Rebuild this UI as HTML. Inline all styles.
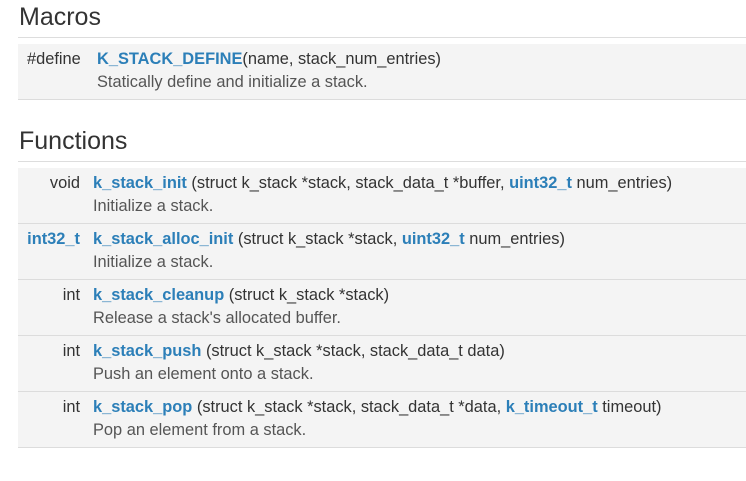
<!DOCTYPE html>
<html><head><style>
body{margin:0;width:746px;height:481px;background:#fff;font-family:"Liberation Sans",sans-serif;color:#333;position:relative;overflow:hidden}
h2{position:absolute;left:19px;margin:0;font-weight:normal;font-size:25px;color:#333}
.hl{position:absolute;left:18px;right:0;height:1px;background:#ddd}
.row{position:absolute;left:18px;right:0;height:55px;background:#f4f4f4;border-bottom:1px solid #dcdcdc;font-size:16.4px}
.t{position:absolute;top:6px;text-align:right;white-space:nowrap}
.n{position:absolute;top:6px;white-space:nowrap}
.d{position:absolute;top:29px;white-space:nowrap;color:#555}
b{color:#2c7fb8}
</style></head><body>
<h2 style="top:3px">Macros</h2>
<div class="hl" style="top:37px"></div>
<div class="row" style="top:44px">
<span class="t" style="left:9px">#define</span>
<span class="n" style="left:79px"><b>K_STACK_DEFINE</b>(name, stack_num_entries)</span>
<span class="d" style="left:79px">Statically define and initialize a stack.</span>
</div>
<h2 style="top:127px">Functions</h2>
<div class="hl" style="top:161px"></div>
<div class="row" style="top:168px"><span class="t" style="right:666px">void</span><span class="n" style="left:75px"><b>k_stack_init</b> (struct k_stack *stack, stack_data_t *buffer, <b>uint32_t</b> num_entries)</span><span class="d" style="left:75px">Initialize a stack.</span></div>
<div class="row" style="top:224px"><span class="t" style="right:666px"><b>int32_t</b></span><span class="n" style="left:75px"><b>k_stack_alloc_init</b> (struct k_stack *stack, <b>uint32_t</b> num_entries)</span><span class="d" style="left:75px">Initialize a stack.</span></div>
<div class="row" style="top:280px"><span class="t" style="right:666px">int</span><span class="n" style="left:75px"><b>k_stack_cleanup</b> (struct k_stack *stack)</span><span class="d" style="left:75px">Release a stack's allocated buffer.</span></div>
<div class="row" style="top:336px"><span class="t" style="right:666px">int</span><span class="n" style="left:75px"><b>k_stack_push</b> (struct k_stack *stack, stack_data_t data)</span><span class="d" style="left:75px">Push an element onto a stack.</span></div>
<div class="row" style="top:392px"><span class="t" style="right:666px">int</span><span class="n" style="left:75px"><b>k_stack_pop</b> (struct k_stack *stack, stack_data_t *data, <b>k_timeout_t</b> timeout)</span><span class="d" style="left:75px">Pop an element from a stack.</span></div>
</body></html>
